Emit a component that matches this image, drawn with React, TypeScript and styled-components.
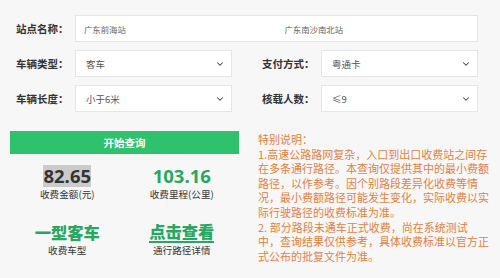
import React from 'react';
import styled, { createGlobalStyle } from 'styled-components';
import { ChevronDown } from 'lucide-react';

const GlobalStyle = createGlobalStyle`
  html, body {
    margin: 0;
    padding: 0;
    background: #f7f7f7;
  }
  body {
    font-family: "Noto Sans CJK SC", "Open Sans", sans-serif;
    color: #333;
  }
`;

const Page = styled.div`
  width: 500px;
  height: 278px;
  overflow: hidden;
  background: #f7f7f7;
`;

const Form = styled.div`
  display: grid;
  grid-template-columns: 59px 157px 30px 59px 157px;
  grid-auto-rows: 27px;
  row-gap: 8px;
  padding: 15px 0 0 16px;
`;

const Label = styled.div<{ $col?: number }>`
  grid-column: ${(p) => p.$col ?? 1};
  display: flex;
  align-items: center;
  font-size: 10.5px;
  font-weight: 700;
  color: #333;
  white-space: nowrap;
`;

const StationBox = styled.div`
  grid-column: 2 / 6;
  display: grid;
  grid-template-columns: 1fr 1fr;
  background: #fff;
  border: 1px solid #e6e6e6;
  box-sizing: border-box;
`;

const StationText = styled.div`
  display: flex;
  align-items: center;
  padding-left: 8px;
  font-size: 8.4px;
  color: #666;
`;

const Select = styled.div<{ $col: number }>`
  grid-column: ${(p) => p.$col};
  display: flex;
  align-items: center;
  justify-content: space-between;
  padding: 0 6px 0 10px;
  background: #fff;
  border: 1px solid #e6e6e6;
  box-sizing: border-box;
  font-size: 9.5px;
  color: #555;
  svg {
    color: #444;
  }
`;

const Bottom = styled.div`
  display: grid;
  grid-template-columns: 229px 1fr;
  column-gap: 19px;
  padding: 0 0 0 10px;
  margin-top: 19px;
`;

const Left = styled.div`
  display: flex;
  flex-direction: column;
`;

const QueryButton = styled.button`
  height: 23px;
  border: none;
  background: #2ec26c;
  color: #fff;
  font-family: "Noto Sans CJK SC", sans-serif;
  font-size: 10.5px;
  font-weight: 700;
  padding: 0;
  cursor: pointer;
`;

const Results = styled.div`
  display: grid;
  grid-template-columns: 1fr 1fr;
  row-gap: 20px;
  margin-top: 11px;
`;

const Cell = styled.div`
  display: flex;
  flex-direction: column;
  align-items: center;
`;

const Num = styled.span<{ $green?: boolean; $sel?: boolean }>`
  font-family: "Open Sans", "Noto Sans CJK SC", sans-serif;
  font-size: 18.5px;
  font-weight: 700;
  line-height: 22px;
  color: ${(p) => (p.$green ? '#27a862' : '#333')};
  background: ${(p) => (p.$sel ? '#cbcbcb' : 'transparent')};
`;

const Big = styled.span<{ $link?: boolean }>`
  font-size: 16.3px;
  font-weight: 900;
  color: #27a862;
  border-bottom: ${(p) => (p.$link ? '2px solid #27a862' : 'none')};
  line-height: ${(p) => (p.$link ? '20px' : '22px')};
`;

const Caption = styled.div`
  font-size: 9.6px;
  line-height: 13px;
  margin-top: 1px;
  color: #333;
`;

const Notice = styled.div`
  padding-top: 1px;
  width: 234px;
  font-size: 11px;
  line-height: 14.6px;
  color: #e8803f;
`;

export default function App() {
  return (
    <Page>
      <GlobalStyle />
      <Form>
        <Label>站点名称：</Label>
        <StationBox>
          <StationText>广东前海站</StationText>
          <StationText>广东南沙南北站</StationText>
        </StationBox>

        <Label>车辆类型：</Label>
        <Select $col={2}>
          客车
          <ChevronDown size={10} strokeWidth={2.5} />
        </Select>
        <Label $col={4}>支付方式：</Label>
        <Select $col={5}>
          粤通卡
          <ChevronDown size={10} strokeWidth={2.5} />
        </Select>

        <Label>车辆长度：</Label>
        <Select $col={2}>
          小于6米
          <ChevronDown size={10} strokeWidth={2.5} />
        </Select>
        <Label $col={4}>核载人数：</Label>
        <Select $col={5}>
          ≤9
          <ChevronDown size={10} strokeWidth={2.5} />
        </Select>
      </Form>

      <Bottom>
        <Left>
          <QueryButton>开始查询</QueryButton>
          <Results>
            <Cell>
              <Num $sel>82.65</Num>
              <Caption>收费金额(元)</Caption>
            </Cell>
            <Cell>
              <Num $green>103.16</Num>
              <Caption>收费里程(公里)</Caption>
            </Cell>
            <Cell>
              <Big>一型客车</Big>
              <Caption>收费车型</Caption>
            </Cell>
            <Cell>
              <Big $link>点击查看</Big>
              <Caption>通行路径详情</Caption>
            </Cell>
          </Results>
        </Left>
        <Notice>
          特别说明：
          <br />
          1.高速公路路网复杂，入口到出口收费站之间存在多条通行路径。本查询仅提供其中的最小费额路径，以作参考。因个别路段差异化收费等情况，最小费额路径可能发生变化，实际收费以实际行驶路径的收费标准为准。
          <br />
          2. 部分路段未通车正式收费，尚在系统测试
          <br />
          中，查询结果仅供参考，具体收费标准以官方正式公布的批复文件为准。
        </Notice>
      </Bottom>
    </Page>
  );
}
